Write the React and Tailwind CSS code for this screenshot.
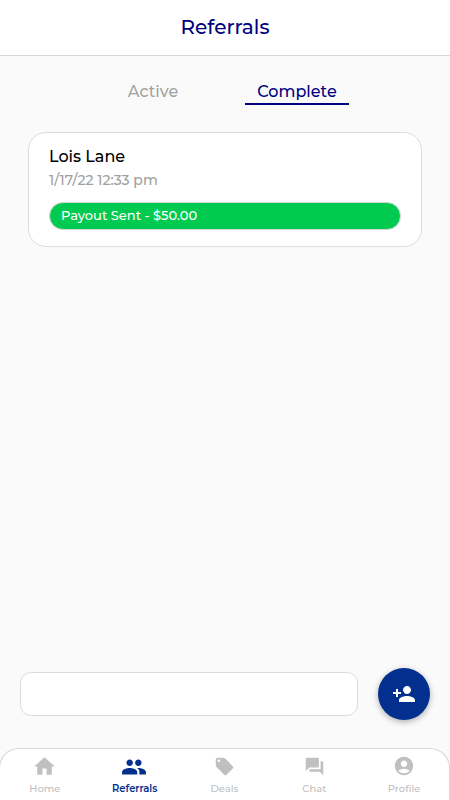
import { MdHome, MdPeople, MdLocalOffer, MdQuestionAnswer, MdAccountCircle, MdPersonAdd } from 'react-icons/md';

const tabs = [
  { label: 'Home', Icon: MdHome, size: 25, offset: '' },
  { label: 'Referrals', Icon: MdPeople, size: 26, offset: 'mr-0.5', active: true },
  { label: 'Deals', Icon: MdLocalOffer, size: 21, offset: '' },
  { label: 'Chat', Icon: MdQuestionAnswer, size: 21, offset: '' },
  { label: 'Profile', Icon: MdAccountCircle, size: 22, offset: 'mb-0.5' },
];

export default function App() {
  return (
    <div className="flex h-[800px] w-[450px] flex-col overflow-hidden bg-[#fafafa] font-['Montserrat','Inter',sans-serif] font-medium">
      <header className="flex h-14 shrink-0 items-center justify-center border-b border-[#d8d8d8] bg-white">
        <h1 className="-mt-0.5 text-[20px] leading-6 text-[#000080]">Referrals</h1>
      </header>

      <div className="mt-6 flex h-[25px] shrink-0 items-start pl-[101px] text-[16px]">
        <button className="w-[104px] leading-[23px] text-[#a3a3a3]">Active</button>
        <button className="ml-10 w-[104px] border-b-2 border-[#000080] leading-[23px] text-[#000080]">Complete</button>
      </div>

      <main className="flex-1 px-7 pt-[27px]">
        <article className="h-[115px] rounded-[18px] border border-[#dcdcdc] bg-white px-5 pt-3">
          <h2 className="text-[16px] leading-6 text-black">Lois Lane</h2>
          <p className="text-[14px] leading-[23px] text-[#a0a0a0]">1/17/22 12:33 pm</p>
          <div className="mt-2.5 flex h-7 items-center rounded-full border border-[#d8d8d8] bg-[#00ca50] pb-0.5 pl-[11px] text-[13px] leading-5 text-white">
            Payout Sent - $50.00
          </div>
        </article>
      </main>

      <div className="flex h-[52px] shrink-0 items-center gap-5 px-5">
        <input aria-label="Search referrals" className="h-11 w-[338px] rounded-[11px] border border-[#dcdcdc] bg-white px-3 outline-none" />
        <button aria-label="Add referral" className="flex size-[52px] items-center justify-center rounded-full bg-[#032f8e] text-white shadow-[0_2px_6px_rgba(0,0,0,0.3)]">
          <MdPersonAdd size={24} />
        </button>
      </div>

      <nav className="mt-7 -ml-px flex h-[52px] w-[451px] shrink-0 rounded-t-[20px] border border-b-0 border-[#d8d8d8] bg-white">
        {tabs.map(({ label, Icon, size, offset, active }) => (
          <button key={label} className={`flex flex-1 flex-col items-center pt-[5px] ${active ? 'font-semibold text-[#032f8e]' : 'text-[#c0c0c0]'}`}>
            <span className="flex h-[25px] items-center"><Icon size={size} className={offset} /></span>
            <span className="mt-[3px] text-[10px] leading-[14px]">{label}</span>
          </button>
        ))}
      </nav>
    </div>
  );
}
